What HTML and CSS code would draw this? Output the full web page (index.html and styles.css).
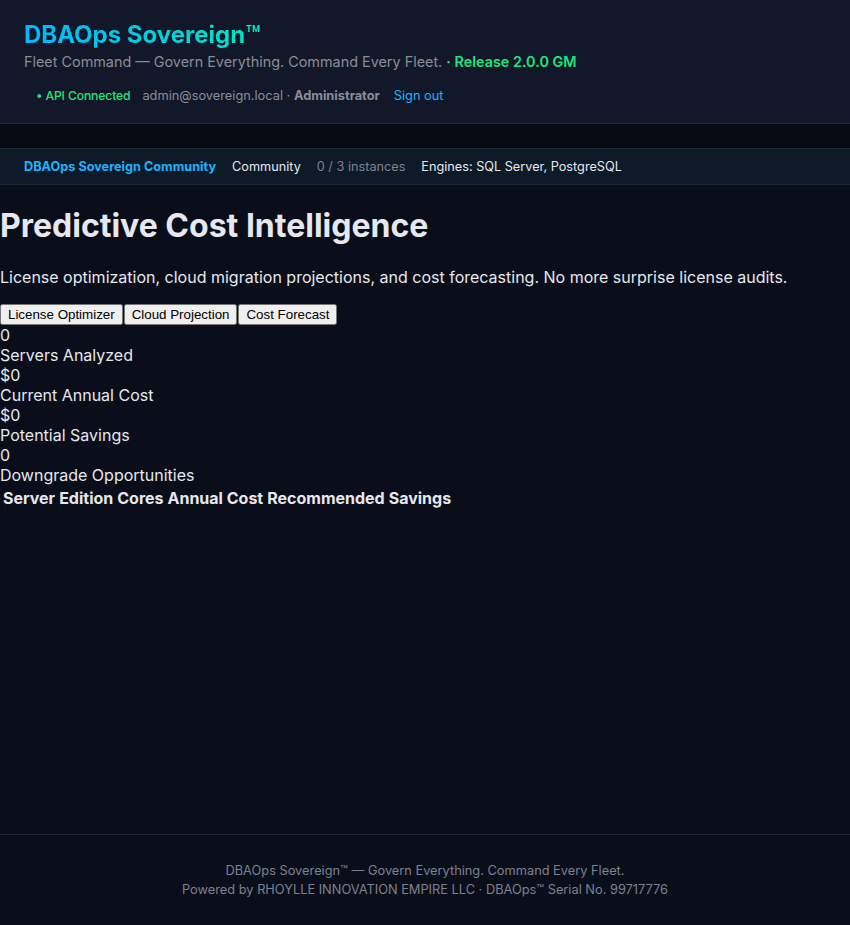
FILE: index.html
```html
<!DOCTYPE html>
<html>
<head>
    <title>DBAOps Sovereign - Predictive Cost Intelligence</title>
    <link rel="stylesheet" href="styles.css">
</head>
<body>
    <div class="app">
        <header class="topbar">
            <div class="brand">DBAOps Sovereign™</div>
            <div class="tagline">Fleet Command — Govern Everything. Command Every Fleet. <span class="release">· Release 2.0.0 GM</span></div>
            <div class="session">
                <span class="api-ok">• API Connected</span>
                <span class="user">admin@sovereign.local · <b>Administrator</b></span>
                <a class="signout" href="#">Sign out</a>
            </div>
        </header>

        <div class="spacer"></div>

        <div class="license-strip">
            <span class="edition">DBAOps Sovereign Community</span>
            <span class="tier">Community</span>
            <span class="count">0 / 3 instances</span>
            <span class="engines">Engines: SQL Server, PostgreSQL</span>
        </div>

        <main class="content">
            <h1>Predictive Cost Intelligence</h1>
            <p>License optimization, cloud migration projections, and cost forecasting. No more surprise license audits.</p>
            <div class="tabs">
                <button>License Optimizer</button><button>Cloud Projection</button><button>Cost Forecast</button>
            </div>
            <div class="stats">
                <div>0</div>
                <div>Servers Analyzed</div>
                <div>$0</div>
                <div>Current Annual Cost</div>
                <div>$0</div>
                <div>Potential Savings</div>
                <div>0</div>
                <div>Downgrade Opportunities</div>
            </div>
            <table>
                <thead>
                    <tr>
                        <th>Server</th>
                        <th>Edition</th>
                        <th>Cores</th>
                        <th>Annual Cost</th>
                        <th>Recommended</th>
                        <th>Savings</th>
                    </tr>
                </thead>
                <tbody></tbody>
            </table>
        </main>

        <footer class="footer">
            <div>DBAOps Sovereign™ — Govern Everything. Command Every Fleet.</div>
            <div>Powered by RHOYLLE INNOVATION EMPIRE LLC · DBAOps™ Serial No. 99717776</div>
        </footer>
    </div>
</body>
</html>
```

FILE: styles.css
```css
body {
    margin: 0;
    padding: 0;
    background-color: #0a0e1a;
    color: #e6e8ee;
    font-family: Inter, "Noto Sans", sans-serif;
}

.app {
    min-height: 100vh;
    display: flex;
    flex-direction: column;
}

.topbar {
    background-color: #121829;
    border-bottom: 1px solid #242a3a;
    padding: 20px 24px 19px 24px;
}

.brand {
    font-size: 24px;
    font-weight: 700;
    line-height: 30px;
    background: linear-gradient(90deg, #00b8ff, #00e6c3);
    -webkit-background-clip: text;
    background-clip: text;
    color: transparent;
    display: inline-block;
}

.tagline {
    margin-top: 3px;
    font-size: 14.4px;
    line-height: 18px;
    color: #8a8d97;
}

.release {
    color: #1fe57d;
    font-weight: 600;
}

.session {
    margin-top: 17px;
    padding-left: 12px;
    display: flex;
    align-items: center;
    gap: 12px;
    font-size: 12.8px;
    line-height: 16px;
}

.api-ok {
    color: #1fe57d;
    font-size: 12.2px;
    font-weight: 500;
    letter-spacing: -0.15px;
}

.user {
    color: #8a8d97;
}

.user b {
    font-weight: 700;
}

.signout {
    color: #1fb2ff;
    text-decoration: none;
    margin-left: 2px;
}

.spacer {
    height: 24px;
    background-color: #080b14;
}

.license-strip {
    background-color: #0d1a27;
    border-top: 1px solid #1a2836;
    border-bottom: 1px solid #1a2836;
    padding: 9px 24px;
    display: flex;
    gap: 16px;
    font-size: 12.7px;
    line-height: 17px;
}

.edition {
    color: #1fb2ff;
    font-weight: 700;
}

.tier {
    color: #e6e8ee;
}

.count {
    color: #7d8190;
}

.engines {
    color: #e6e8ee;
}

.content {
    flex: 1;
}

h1 {
    font-size: 32px;
    font-weight: 700;
    line-height: 40px;
    margin: 21px 0;
}

p {
    font-size: 16px;
    line-height: 20px;
    margin: 16px 0 16px 0;
}

.tabs button {
    font-family: "Liberation Sans", Arial, sans-serif;
    font-size: 13.33px;
    margin: 0 1px 0 0;
}

.stats {
    font-size: 16px;
    line-height: 20px;
}

table {
    font-size: 16px;
    color: #e6e8ee;
}

.footer {
    border-top: 1px solid #1f2433;
    padding: 26px 24px 26px 24px;
    text-align: center;
    font-size: 12.8px;
    line-height: 19px;
    color: #7d8190;
}
```
